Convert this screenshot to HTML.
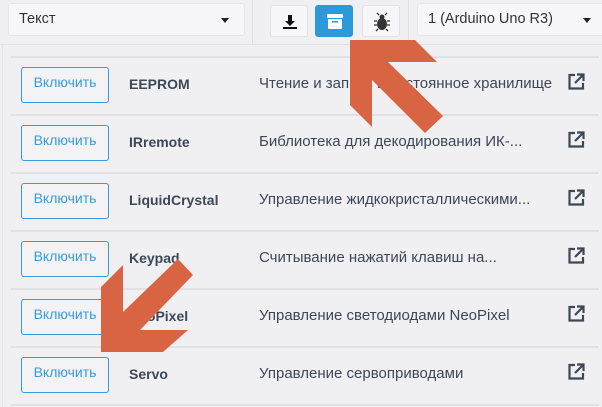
<!DOCTYPE html>
<html><head><meta charset="utf-8"><style>
*{margin:0;padding:0;box-sizing:border-box}
body{width:602px;height:407px;overflow:hidden;background:#f0f0f3;font-family:"Liberation Sans",sans-serif;position:relative}
.tb{position:absolute;left:0;top:0;width:602px;height:45px;border-bottom:1px solid #e0e0e5;background:#f0f0f3}
.dd{position:absolute;top:3px;height:33px;background:#f7f7f9;border:1px solid #e6e6ea;border-radius:3px;font-size:14.5px;color:#333;line-height:31px;padding-left:10px}
.dd:after{content:"";position:absolute;right:15px;top:14px;border-left:4px solid transparent;border-right:4px solid transparent;border-top:5px solid #222}
.vd{position:absolute;top:0;width:1px;height:45px;background:#e0e0e5}
.ib{position:absolute;top:5px;width:38px;height:32px;border:1px solid #e2e2e6;background:#f7f7f9;border-radius:3px}
.sep{position:absolute;left:11px;width:588px;height:2px;background:#e0e1e6}
.btn{position:absolute;left:21px;width:88px;height:36px;border:1px solid #3a9ad9;border-radius:3px;color:#3a9ad9;font-size:14px;text-align:center;line-height:28px;background:#f3f3f6}
.nm{position:absolute;left:129px;font-size:14px;font-weight:bold;color:#3d4756}
.ds{position:absolute;left:259px;font-size:15px;color:#3d4756}
.ex{position:absolute;left:567px}
</style></head><body>
<div style="position:absolute;left:2px;top:45px;width:1px;height:362px;background:#e4e4e8"></div>
<div class="tb"></div>
<div class="dd" style="left:8px;width:237px">Текст</div>
<div class="vd" style="left:252px"></div>
<div class="vd" style="left:408px"></div>
<div class="ib" style="left:270px"><svg width="38" height="32" viewBox="0 0 38 32"><path d="M17 9h4v6h3l-5 5-5-5h3z" fill="#111"/><rect x="12" y="21" width="14" height="2" fill="#111"/></svg></div>
<div class="ib" style="left:315px;background:#2d9ad8;border-color:#2d9ad8"><svg width="38" height="32" viewBox="0 0 38 32"><rect x="11" y="8" width="16" height="4" rx="1" fill="#fff"/><rect x="12" y="13" width="14" height="10" rx="1" fill="#fff"/><rect x="16" y="15" width="6" height="1.5" fill="#2d9ad8"/></svg></div>
<div class="ib" style="left:362px"><svg width="38" height="32" viewBox="0 0 38 32"><ellipse cx="19" cy="18" rx="5" ry="6" fill="#333"/><circle cx="19" cy="11" r="2.5" fill="#333"/><path d="M16 9l-2-2M22 9l2-2M14 15h-3M24 15h3M14 19h-3M24 19h3M15 23l-2 2M23 23l2 2" stroke="#333" stroke-width="1.3"/></svg></div>
<div class="dd" style="left:417px;width:190px">1 (Arduino Uno R3)</div>
<div class="sep" style="top:56px"></div>
<div class="sep" style="top:114px"></div>
<div class="sep" style="top:172px"></div>
<div class="sep" style="top:230px"></div>
<div class="sep" style="top:288px"></div>
<div class="sep" style="top:346px"></div>
<div class="sep" style="top:404px"></div>

<div class="btn" style="top:67px">Включить</div><div class="nm" style="top:76px">EEPROM</div><div class="ds" style="top:75px">Чтение и запись в постоянное хранилище</div>
<div class="btn" style="top:125px">Включить</div><div class="nm" style="top:134px">IRremote</div><div class="ds" style="top:133px">Библиотека для декодирования ИК-...</div>
<div class="btn" style="top:183px">Включить</div><div class="nm" style="top:192px">LiquidCrystal</div><div class="ds" style="top:191px">Управление жидкокристаллическими...</div>
<div class="btn" style="top:241px">Включить</div><div class="nm" style="top:250px">Keypad</div><div class="ds" style="top:249px">Считывание нажатий клавиш на...</div>
<div class="btn" style="top:299px">Включить</div><div class="nm" style="top:308px">NeoPixel</div><div class="ds" style="top:307px">Управление светодиодами NeoPixel</div>
<div class="btn" style="top:357px">Включить</div><div class="nm" style="top:366px">Servo</div><div class="ds" style="top:365px">Управление сервоприводами</div>

<svg class="ex" style="top:72px" width="19" height="19"><path d="M8 3H2.5v13.5H16V11" fill="none" stroke="#3d4756" stroke-width="2.2"/><path d="M10 2.5h6.5V9M16.5 2.5L8 11" fill="none" stroke="#3d4756" stroke-width="2.2"/></svg>
<svg class="ex" style="top:130px" width="19" height="19"><path d="M8 3H2.5v13.5H16V11" fill="none" stroke="#3d4756" stroke-width="2.2"/><path d="M10 2.5h6.5V9M16.5 2.5L8 11" fill="none" stroke="#3d4756" stroke-width="2.2"/></svg>
<svg class="ex" style="top:188px" width="19" height="19"><path d="M8 3H2.5v13.5H16V11" fill="none" stroke="#3d4756" stroke-width="2.2"/><path d="M10 2.5h6.5V9M16.5 2.5L8 11" fill="none" stroke="#3d4756" stroke-width="2.2"/></svg>
<svg class="ex" style="top:246px" width="19" height="19"><path d="M8 3H2.5v13.5H16V11" fill="none" stroke="#3d4756" stroke-width="2.2"/><path d="M10 2.5h6.5V9M16.5 2.5L8 11" fill="none" stroke="#3d4756" stroke-width="2.2"/></svg>
<svg class="ex" style="top:304px" width="19" height="19"><path d="M8 3H2.5v13.5H16V11" fill="none" stroke="#3d4756" stroke-width="2.2"/><path d="M10 2.5h6.5V9M16.5 2.5L8 11" fill="none" stroke="#3d4756" stroke-width="2.2"/></svg>
<svg class="ex" style="top:362px" width="19" height="19"><path d="M8 3H2.5v13.5H16V11" fill="none" stroke="#3d4756" stroke-width="2.2"/><path d="M10 2.5h6.5V9M16.5 2.5L8 11" fill="none" stroke="#3d4756" stroke-width="2.2"/></svg>

<svg style="position:absolute;left:0;top:0" width="602" height="407">
<polygon fill="#d96443" points="350,40 415,40 437,62 388,62 443,116 425,133 372,80 372,127 350,105"/>
<polygon fill="#d96443" points="178,259 193,275 140,330 188,330 163,352 101,352 101,287 123,265 123,312"/>
</svg>
</body></html>
